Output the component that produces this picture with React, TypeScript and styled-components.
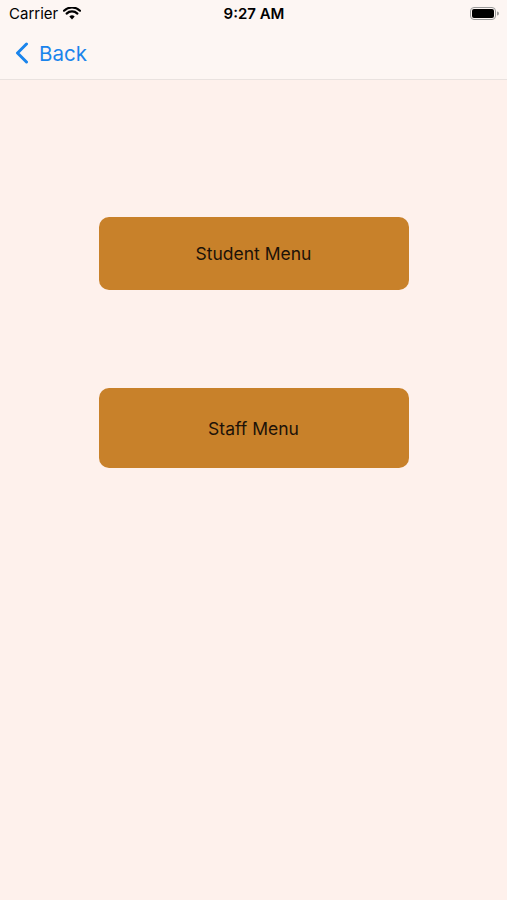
import styled, { createGlobalStyle } from "styled-components";

const GlobalStyle = createGlobalStyle`
  html, body {
    margin: 0;
    padding: 0;
    background: #fef1ec;
    font-family: Inter, "Liberation Sans", Arial, sans-serif;
  }
`;

const Screen = styled.div`
  width: 507px;
  height: 900px;
  background: #fef1ec;
  display: flex;
  flex-direction: column;
`;

const TopBar = styled.div`
  background: #fdf6f3;
  border-bottom: 1px solid #e9e2df;
  height: 79px;
  display: flex;
  flex-direction: column;
`;

const StatusBar = styled.div`
  height: 27px;
  display: grid;
  grid-template-columns: 1fr auto 1fr;
  align-items: center;
  padding: 0 8px 0 9px;
  font-size: 15px;
  color: #000;
`;

const Carrier = styled.div`
  display: flex;
  align-items: center;
  gap: 5px;
  font-weight: 400;
`;

const Clock = styled.div`
  font-weight: 600;
`;

const Battery = styled.div`
  justify-self: end;
  display: flex;
  align-items: center;
`;

const NavBar = styled.div`
  flex: 1;
  display: flex;
  align-items: center;
  padding: 0 0 0 15px;
`;

const BackButton = styled.button`
  display: flex;
  align-items: center;
  gap: 10px;
  background: none;
  border: none;
  padding: 0;
  color: #1a84ec;
  font-family: inherit;
  font-size: 20.5px;
  cursor: pointer;
`;

const Content = styled.div`
  display: flex;
  flex-direction: column;
  align-items: center;
  padding-top: 137px;
`;

const MenuButton = styled.button<{ $height: number; $gap: number }>`
  width: 310px;
  height: ${(p) => p.$height}px;
  margin-bottom: ${(p) => p.$gap}px;
  background: #c8812a;
  border: none;
  border-radius: 10px;
  color: #1c1208;
  font-family: inherit;
  font-size: 17.5px;
  cursor: pointer;
`;

const App = () => {
  return (
    <>
      <GlobalStyle />
      <Screen>
        <TopBar>
          <StatusBar>
            <Carrier>
              Carrier
              <svg width="18" height="13" viewBox="0 0 18 13">
                <path d="M9 12.5 L6.3 9.4 A4 4 0 0 1 11.7 9.4 Z" fill="#000" />
                <path
                  d="M3.6 6.6 A7.8 7.8 0 0 1 14.4 6.6"
                  stroke="#000"
                  strokeWidth="2.2"
                  fill="none"
                  strokeLinecap="round"
                />
                <path
                  d="M1 3.7 A11.6 11.6 0 0 1 17 3.7"
                  stroke="#000"
                  strokeWidth="2.2"
                  fill="none"
                  strokeLinecap="round"
                />
              </svg>
            </Carrier>
            <Clock>9:27 AM</Clock>
            <Battery>
              <svg width="29" height="13" viewBox="0 0 29 13">
                <rect x="0.5" y="0.5" width="25" height="12" rx="3.5" fill="none" stroke="#999" />
                <rect x="2" y="2" width="22" height="9" rx="2" fill="#000" />
                <path d="M27 4.5 A2 2 0 0 1 27 8.5 Z" fill="#999" />
              </svg>
            </Battery>
          </StatusBar>
          <NavBar>
            <BackButton>
              <svg width="14" height="22" viewBox="0 0 14 22">
                <path
                  d="M11.5 2 L2.5 11 L11.5 20"
                  stroke="#1a84ec"
                  strokeWidth="3"
                  fill="none"
                  strokeLinecap="round"
                  strokeLinejoin="round"
                />
              </svg>
              Back
            </BackButton>
          </NavBar>
        </TopBar>
        <Content>
          <MenuButton $height={73} $gap={98}>
            Student Menu
          </MenuButton>
          <MenuButton $height={80} $gap={0}>
            Staff Menu
          </MenuButton>
        </Content>
      </Screen>
    </>
  );
};

export default App;
